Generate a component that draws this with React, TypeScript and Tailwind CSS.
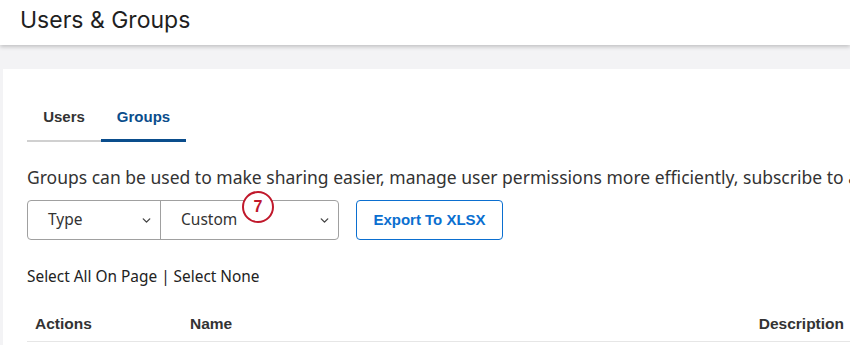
import { ChevronDown } from 'lucide-react'

export default function App() {
  return (
    <div className="w-[850px] h-[345px] overflow-hidden bg-[#f3f3f5] font-['Noto_Sans',sans-serif] text-[#333]">
      {/* Header */}
      <header className="h-[45px] bg-white pl-5 flex items-center shadow-[0_2px_4px_rgba(0,0,0,0.2)] relative z-10">
        <h1 className="text-[23px] text-[#1f1f1f] font-['Inter',sans-serif] leading-none -mt-[4px]">Users &amp; Groups</h1>
      </header>

      {/* Card */}
      <div className="mt-[24px] ml-[3px] bg-white h-[300px] pl-[24px] whitespace-nowrap">
        {/* Tabs */}
        <div className="pt-[35px] flex font-['Liberation_Sans',sans-serif] text-[15px] font-bold">
          <div className="w-[74px] h-[38px] flex items-start justify-center pt-[2px] text-[#333] border-b-[2px] border-[#d0d0d0]">Users</div>
          <div className="w-[85px] h-[38px] flex items-start justify-center pt-[2px] text-[#0a4d8c] border-b-[3px] border-[#0a4d8c]">Groups</div>
        </div>

        {/* Description */}
        <p className="mt-[23px] text-[17.5px] leading-[24px] text-[#333] overflow-hidden w-[823px]">
          Groups can be used to make sharing easier, manage user permissions more efficiently, subscribe to alerts and more.
        </p>

        {/* Filters */}
        <div className="mt-[11px] flex items-center">
          <div className="flex h-[40px] border border-[#a0a0a0] rounded-[4px] text-[15.5px] text-[#333]">
            <div className="w-[133px] flex items-center justify-between pl-[20px] pr-[7px] border-r border-[#a0a0a0]">
              <span>Type</span>
              <ChevronDown size={13} strokeWidth={2.5} className="text-[#444]" />
            </div>
            <div className="w-[177px] flex items-center justify-between pl-[20px] pr-[7px] relative">
              <span>Custom</span>
              <ChevronDown size={13} strokeWidth={2.5} className="text-[#444]" />
              <div className="absolute left-[81px] -top-[10px] w-[32px] h-[32px] rounded-full border-[2.5px] border-[#c0182b] bg-white flex items-center justify-center text-[#c0182b] text-[16px] font-bold font-['Liberation_Sans',sans-serif]">
                7
              </div>
            </div>
          </div>
          <button className="ml-[17px] w-[147px] h-[40px] border border-[#0b6fd0] rounded-[4px] text-[#0b6fd0] text-[15px] font-bold font-['Liberation_Sans',sans-serif]">
            Export To XLSX
          </button>
        </div>

        {/* Select */}
        <div className="mt-[27px] text-[15.4px] leading-[20px] text-[#222]">Select All On Page | Select None</div>

        {/* Table header */}
        <div className="mt-[19px] flex items-center h-[36px] border-b border-[#e6e6e6] font-['Liberation_Sans',sans-serif] text-[15.5px] font-bold text-[#333]">
          <div className="w-[163px] pl-[8px]">Actions</div>
          <div className="flex-1">Name</div>
          <div className="pr-[6px]">Description</div>
        </div>
      </div>
    </div>
  )
}
